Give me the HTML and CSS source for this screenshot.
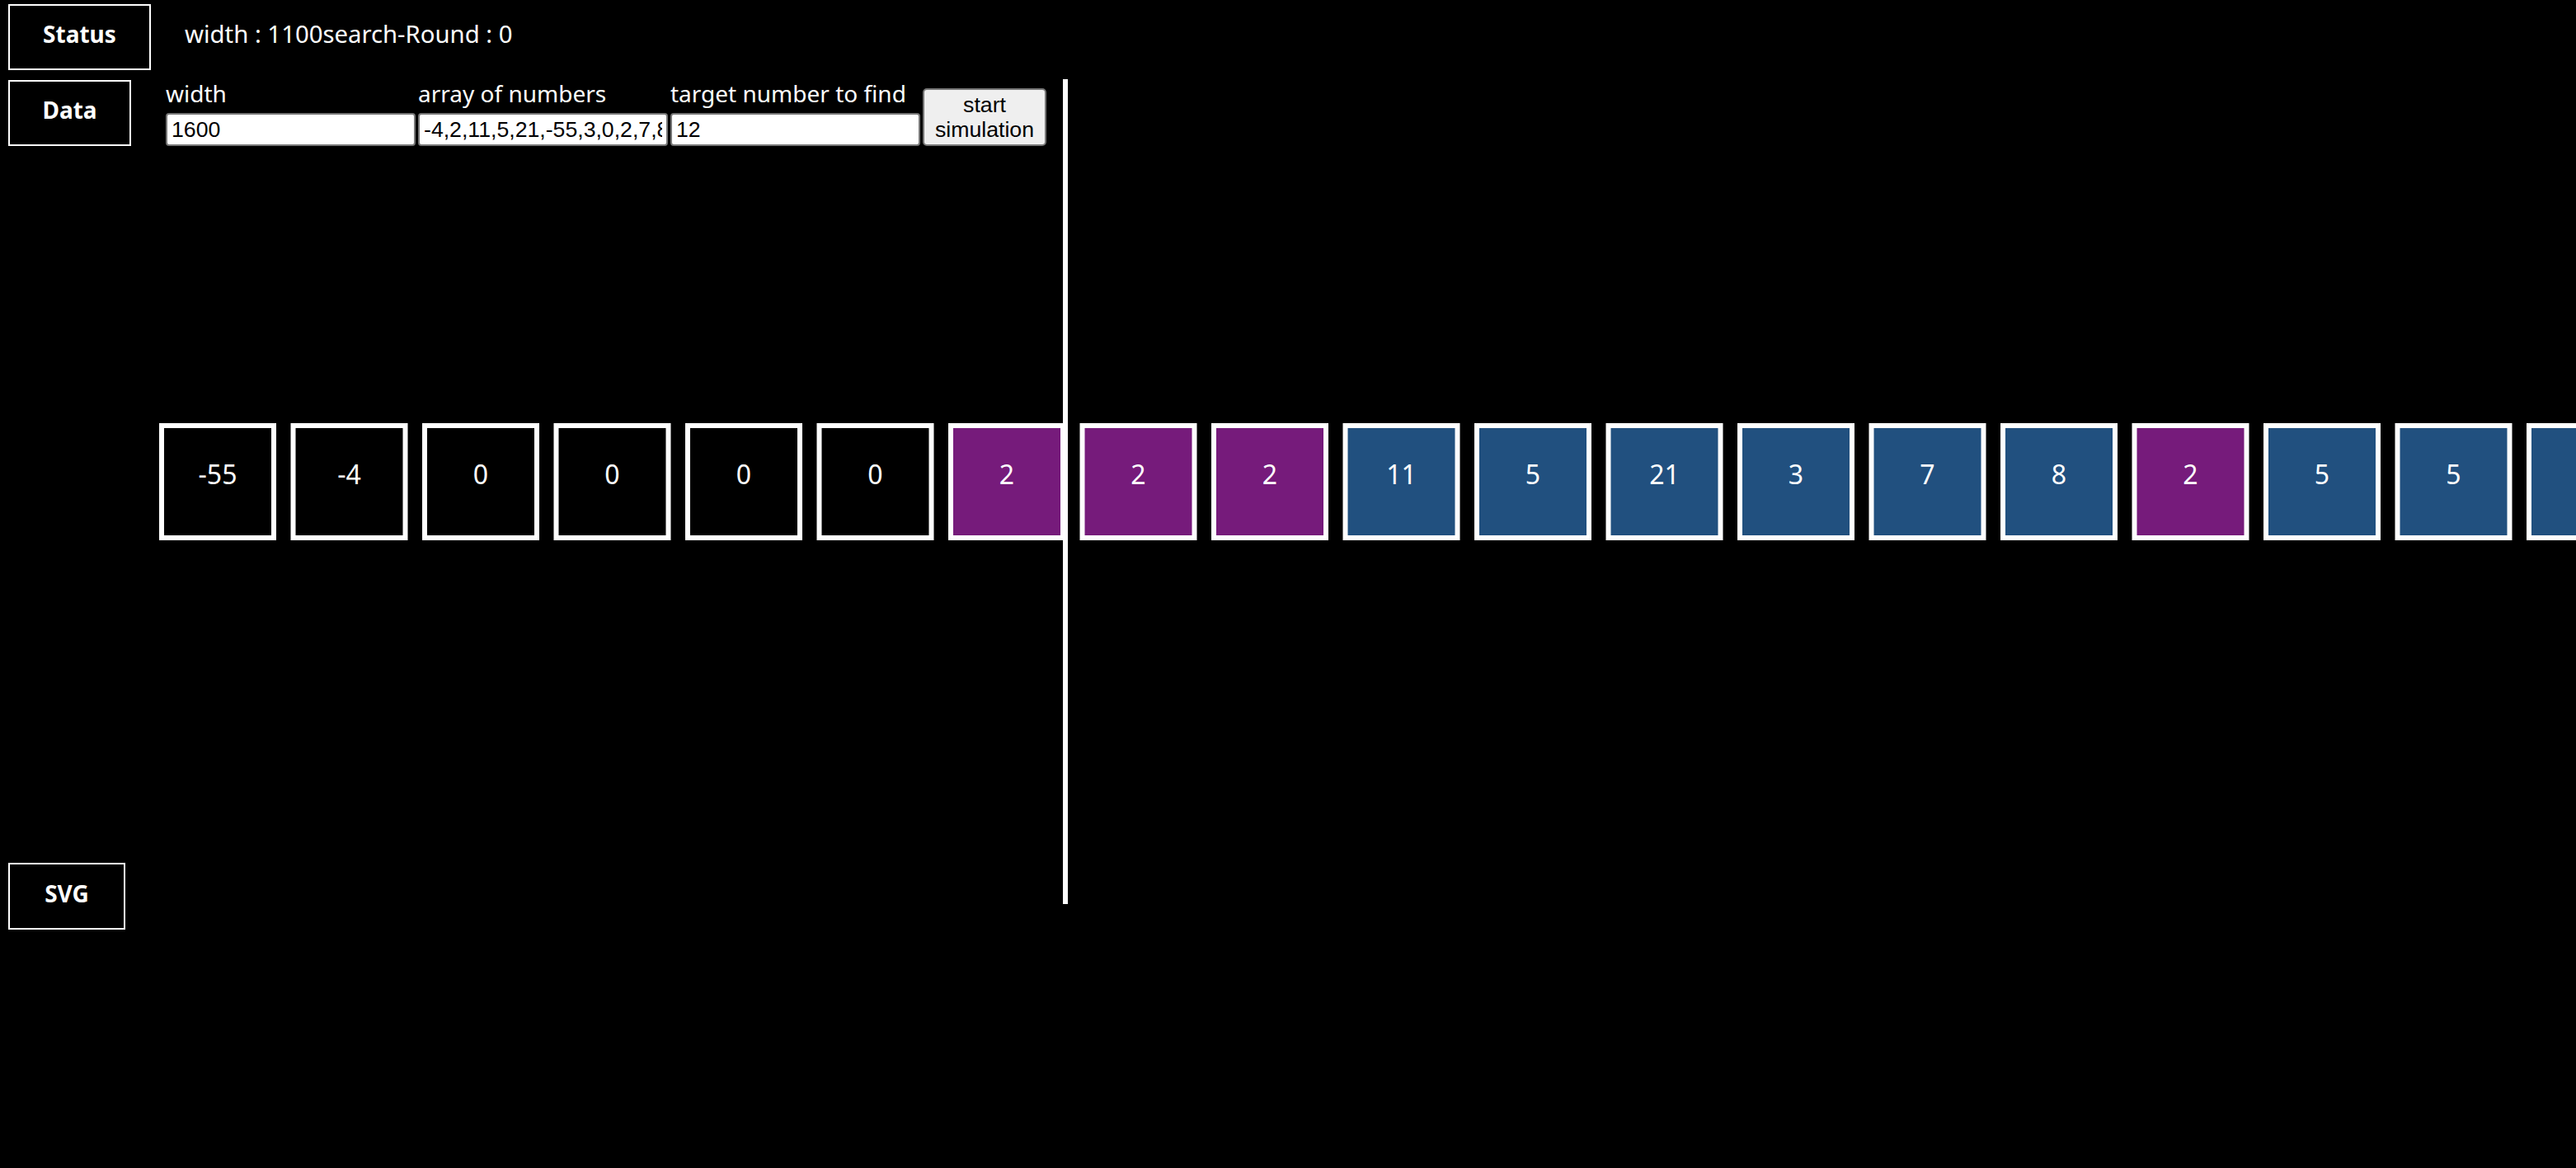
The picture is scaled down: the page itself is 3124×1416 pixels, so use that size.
FILE: index.html
```html
<!DOCTYPE html>
<html>
<head>
<meta charset="utf-8">
<title>Search simulation</title>
<link rel="stylesheet" href="styles.css">
</head>
<body>
<div class="page">
  <div class="row row-status">
    <div class="tag tag-status">Status</div>
    <div class="status-text">width : 1100search-Round : 0</div>
  </div>
  <div class="row row-data">
    <div class="tag tag-data">Data</div>
    <form class="form">
      <div class="field">
        <label>width</label>
        <input type="text" value="1600">
      </div>
      <div class="field">
        <label>array of numbers</label>
        <input type="text" value="-4,2,11,5,21,-55,3,0,2,7,8,2,5,5,9,0,0,2,12">
      </div>
      <div class="field">
        <label>target number to find</label>
        <input type="text" value="12">
      </div>
      <button type="button" class="start">start<br>simulation</button>
    </form>
  </div>
  <div class="row row-svg">
    <div class="tag tag-svg">SVG</div>
  </div>
</div>
<div class="stage">
  <svg class="stage-svg" width="2931" height="1000" viewBox="0 0 2931 1000">
    <g class="cells">
      <rect x="3" y="420" width="136" height="136" class="c-black"/>
      <rect x="162.5" y="420" width="136" height="136" class="c-black"/>
      <rect x="322" y="420" width="136" height="136" class="c-black"/>
      <rect x="481.5" y="420" width="136" height="136" class="c-black"/>
      <rect x="641" y="420" width="136" height="136" class="c-black"/>
      <rect x="800.5" y="420" width="136" height="136" class="c-black"/>
      <rect x="960" y="420" width="136" height="136" class="c-purple"/>
      <rect x="1119.5" y="420" width="136" height="136" class="c-purple"/>
      <rect x="1279" y="420" width="136" height="136" class="c-purple"/>
      <rect x="1438.5" y="420" width="136" height="136" class="c-blue"/>
      <rect x="1598" y="420" width="136" height="136" class="c-blue"/>
      <rect x="1757.5" y="420" width="136" height="136" class="c-blue"/>
      <rect x="1917" y="420" width="136" height="136" class="c-blue"/>
      <rect x="2076.5" y="420" width="136" height="136" class="c-blue"/>
      <rect x="2236" y="420" width="136" height="136" class="c-blue"/>
      <rect x="2395.5" y="420" width="136" height="136" class="c-purple"/>
      <rect x="2555" y="420" width="136" height="136" class="c-blue"/>
      <rect x="2714.5" y="420" width="136" height="136" class="c-blue"/>
      <rect x="2874" y="420" width="136" height="136" class="c-blue"/>
    </g>
    <g class="nums">
      <text x="71" y="491">-55</text>
      <text x="230.5" y="491">-4</text>
      <text x="390" y="491">0</text>
      <text x="549.5" y="491">0</text>
      <text x="709" y="491">0</text>
      <text x="868.5" y="491">0</text>
      <text x="1028" y="491">2</text>
      <text x="1187.5" y="491">2</text>
      <text x="1347" y="491">2</text>
      <text x="1506.5" y="491">11</text>
      <text x="1666" y="491">5</text>
      <text x="1825.5" y="491">21</text>
      <text x="1985" y="491">3</text>
      <text x="2144.5" y="491">7</text>
      <text x="2304" y="491">8</text>
      <text x="2463.5" y="491">2</text>
      <text x="2623" y="491">5</text>
      <text x="2782.5" y="491">5</text>
    </g>
    <rect class="divider" x="1096" y="0" width="6" height="1000"/>
  </svg>
</div>
</body>
</html>
```

FILE: styles.css
```css
html, body {
  margin: 0;
  padding: 0;
  background: #000;
}

body {
  color: #fff;
  font-family: "Noto Sans", "Noto Sans CJK KR", sans-serif;
  overflow: hidden;
  width: 3124px;
  height: 1416px;
  position: relative;
}

.page {
  padding: 5px 0 0 10px;
}

.row {
  display: flex;
}

.tag {
  box-sizing: border-box;
  border: 2px solid #fff;
  display: flex;
  align-items: center;
  justify-content: center;
  padding-bottom: 8px;
  font-weight: 700;
  font-size: 28px;
  height: 80px;
}

.tag-status {
  width: 173px;
}

.tag-data {
  width: 149px;
}

.tag-svg {
  width: 142px;
  height: 81px;
}

.row-status {
  align-items: center;
}

.status-text {
  margin-left: 41px;
  padding-bottom: 8px;
  font-size: 29.3px;
}

.row-data {
  margin-top: 12px;
}

.form {
  display: flex;
  align-items: flex-end;
  gap: 3px;
  margin: 0 0 0 42px;
}

.field {
  display: flex;
  flex-direction: column;
  width: 303px;
}

.field label {
  font-size: 28px;
  line-height: 32px;
  padding-bottom: 8px;
  white-space: nowrap;
}

.field input {
  box-sizing: border-box;
  width: 303px;
  height: 40px;
  margin: 0;
  padding: 0 5px;
  border: 2px solid #767676;
  border-radius: 4px;
  background: #fff;
  color: #000;
  font-family: "Liberation Sans", Arial, sans-serif;
  font-size: 26.67px;
}

.start {
  box-sizing: border-box;
  width: 150px;
  height: 70px;
  margin: 0;
  padding: 0;
  border: 2px solid #767676;
  border-radius: 5px;
  background: #efefef;
  color: #000;
  font-family: "Liberation Sans", Arial, sans-serif;
  font-size: 26.67px;
  line-height: 30px;
}

.row-svg {
  margin-top: 869px;
}

.stage {
  position: absolute;
  left: 193px;
  top: 96px;
  width: 2931px;
  height: 1000px;
}

.stage-svg {
  display: block;
}

.cells rect {
  stroke: #fff;
  stroke-width: 6;
}

.c-black {
  fill: #000;
}

.c-purple {
  fill: #761b7b;
}

.c-blue {
  fill: #21507f;
}

.nums text {
  fill: #fff;
  font-family: "Noto Sans", "Noto Sans CJK KR", sans-serif;
  font-size: 32px;
  text-anchor: middle;
}

.divider {
  fill: #fff;
}
```
